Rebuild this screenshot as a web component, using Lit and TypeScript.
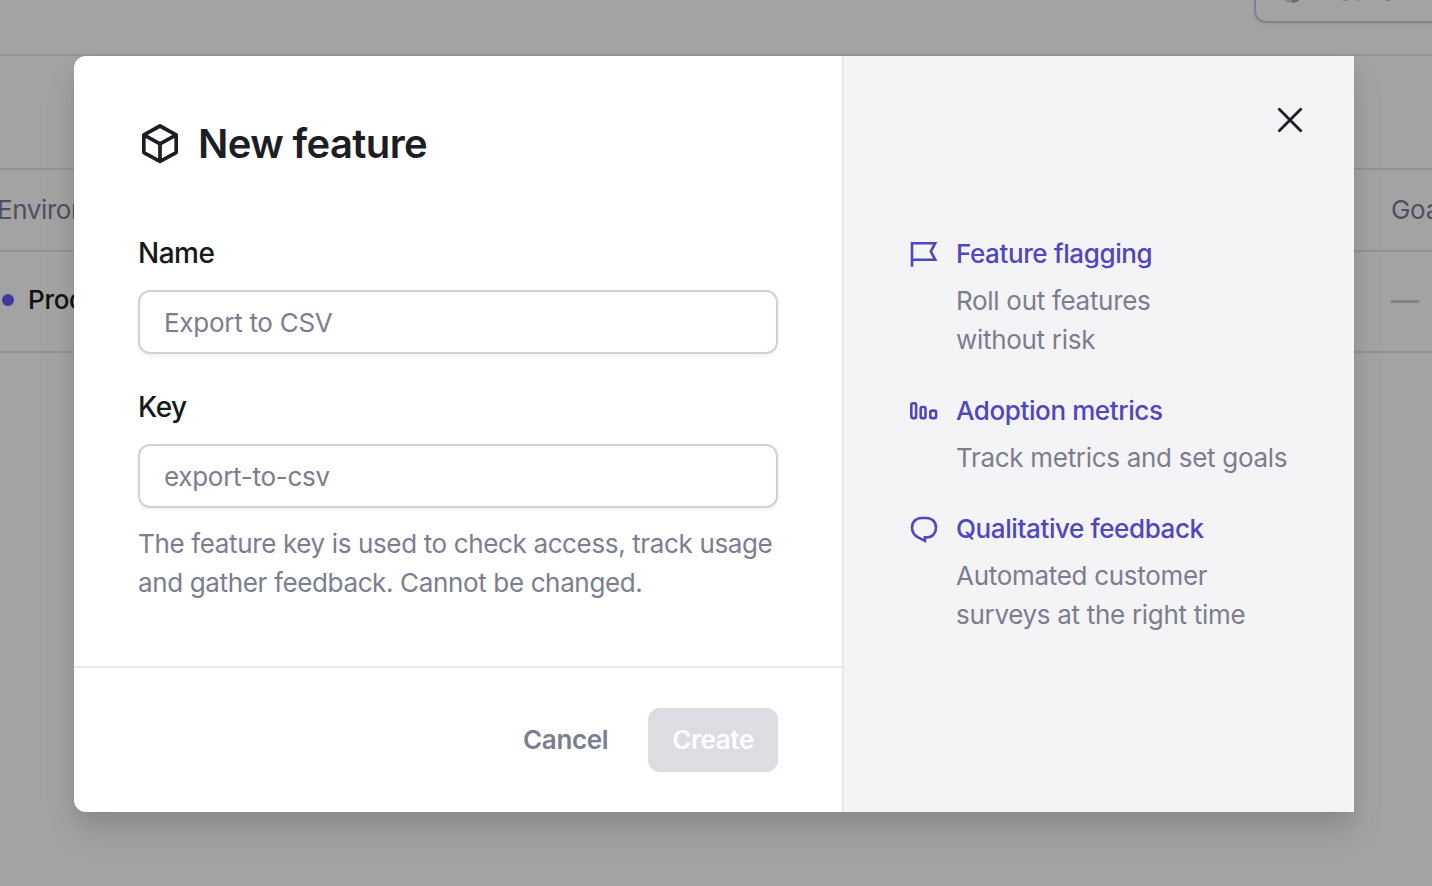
import { LitElement, html, css, svg } from "lit";
import { customElement, property } from "lit/decorators.js";

const icons = {
  flag: svg`<path d="M2 25.7V2.2H25.2L20.8 10.4L25.2 18.7H2" />`,
  bars: svg`<rect x="1.3" y="5.3" width="4.8" height="14.8" rx="1.6" /><rect x="10.7" y="9" width="4.8" height="11.1" rx="1.6" /><rect x="20.3" y="12.6" width="5.8" height="7.5" rx="1.9" />`,
  bubble: svg`<path d="M14.9 21.4H16.6C22.4 21.4 26 17.2 26 11.7C26 5.6 21.8 2 16.2 2H11.8C6.2 2 2 5.6 2 11.7C2 16 4.6 19.6 8.6 21.6L14.9 24.9Z" />`,
};

@customElement("feature-benefit")
class FeatureBenefit extends LitElement {
  @property() icon: keyof typeof icons = "flag";
  @property() heading = "";
  @property() text = "";

  static styles = css`
    :host {
      display: grid;
      grid-template-columns: 28px 1fr;
      column-gap: 18px;
    }
    .icon {
      margin-top: 7px;
      fill: none;
      stroke: #4f46c1;
      stroke-width: 2.6;
    }
    .heading {
      font-weight: 500;
      letter-spacing: -0.4px;
      color: #4f46c1;
    }
    .text {
      grid-column: 2;
      margin-top: 8px;
      white-space: pre-line;
      color: #7b7d91;
    }
  `;

  render() {
    return html`
      <svg class="icon" width="28" height="28" viewBox="0 0 28 28">${icons[this.icon]}</svg>
      <div class="heading">${this.heading}</div>
      <div class="text">${this.text}</div>
    `;
  }
}

@customElement("app-root")
class AppRoot extends LitElement {
  static styles = css`
    :host {
      display: block;
      position: relative;
      width: 1432px;
      height: 886px;
      overflow: hidden;
      background: #a3a3a3;
      font: 400 26px/39px Inter, sans-serif;
      letter-spacing: -0.3px;
      color: #18181c;
    }
    * {
      box-sizing: border-box;
    }
    .topbar {
      display: flex;
      align-items: flex-start;
      height: 56px;
      padding-left: 1254px;
      border-bottom: 2px solid #949495;
    }
    .account {
      display: flex;
      align-items: flex-end;
      flex: none;
      width: 220px;
      height: 64px;
      margin-top: -41px;
      padding: 0 24px 18px;
      border: 2px solid #828288;
      border-radius: 12px;
      box-shadow: 0 2px 4px rgba(0, 0, 0, 0.06);
    }
    .avatar {
      width: 24px;
      height: 24px;
      border-radius: 50%;
      background: linear-gradient(90deg, #85868c 50%, #696b74 50%);
    }
    .marks {
      margin: 0 0 1px 36px;
      fill: #7c7c82;
    }
    .table {
      margin-top: 112px;
      border-top: 2px solid #929293;
    }
    .row {
      display: grid;
      grid-template-columns: 1391px 200px;
      align-items: center;
      height: 82px;
      padding-bottom: 2px;
      border-bottom: 2px solid #929293;
      white-space: nowrap;
    }
    .row.head {
      color: #4e5060;
    }
    .row.body {
      height: 101px;
      padding-bottom: 4px;
    }
    .head-env {
      margin-left: -3px;
      letter-spacing: -0.4px;
    }
    .env {
      display: flex;
      align-items: center;
      gap: 14px;
      padding-left: 2px;
      font-weight: 500;
      color: #121214;
    }
    .dot {
      width: 12px;
      height: 12px;
      margin-top: 1px;
      border-radius: 50%;
      background: #41389f;
    }
    .none {
      padding-top: 2px;
      font-size: 28px;
      font-weight: 500;
      color: #7f7f87;
    }
    .modal {
      position: absolute;
      left: 74px;
      top: 56px;
      display: grid;
      grid-template-columns: 768px 512px;
      width: 1280px;
      height: 756px;
      border-radius: 12px 0 0 12px;
      background: #fff;
      box-shadow: 0 20px 32px rgba(0, 0, 0, 0.1), 0 10px 16px rgba(0, 0, 0, 0.06);
    }
    .main {
      display: flex;
      flex-direction: column;
    }
    .form {
      flex: 1;
      padding: 58px 64px 0;
    }
    .title {
      display: flex;
      align-items: center;
      gap: 16px;
      height: 60px;
      margin: 0 0 60px;
      font-size: 40px;
      font-weight: 600;
      line-height: 60px;
      letter-spacing: -0.62px;
      color: #1d1e25;
    }
    .cube {
      fill: none;
      stroke: #1d1e25;
      stroke-width: 3.7;
      stroke-linejoin: round;
    }
    .label {
      display: block;
      font-size: 28px;
      font-weight: 500;
      letter-spacing: -0.5px;
      color: #18181c;
    }
    .input {
      display: block;
      width: 640px;
      height: 64px;
      margin: 17px 0 34px;
      padding: 0 24px;
      border: 2px solid #d1d1d8;
      border-radius: 12px;
      background: #fff;
      font: inherit;
      letter-spacing: -0.28px;
      box-shadow: 0 2px 4px rgba(0, 0, 0, 0.06);
    }
    .input::placeholder {
      color: #7b7d91;
      opacity: 1;
    }
    .input.key {
      margin-bottom: 16px;
    }
    .help {
      margin: 0;
      white-space: pre;
      letter-spacing: -0.36px;
      color: #7b7d91;
    }
    .footer {
      display: flex;
      justify-content: flex-end;
      align-items: center;
      gap: 16px;
      height: 146px;
      padding: 0 64px;
      border-top: 2px solid #e9e9ec;
    }
    .button {
      height: 64px;
      padding: 0 24px 2px;
      border: 0;
      border-radius: 12px;
      background: none;
      font: inherit;
      font-weight: 600;
      letter-spacing: -0.34px;
      color: #7b7d91;
    }
    .button.primary {
      background: #dcdde2;
      color: #fff;
    }
    .side {
      display: flex;
      flex-direction: column;
      border-left: 2px solid #e6e6ea;
      background: #f4f4f6;
    }
    .close {
      align-self: flex-end;
      margin: 48px 48px 0 0;
      fill: none;
      stroke: #1d1e25;
      stroke-width: 2.8;
      stroke-linecap: round;
    }
    .benefits {
      display: flex;
      flex-direction: column;
      gap: 32px;
      padding: 98px 0 0 66px;
    }
  `;

  render() {
    return html`
      <header class="topbar">
        <div class="account">
          <div class="avatar"></div>
          <svg class="marks" width="70" height="4" viewBox="0 0 70 4">
            <path d="M3 2H7V3H3ZM17 2H19V3H17ZM46 2H50V3H46Z" />
          </svg>
        </div>
      </header>
      <div class="table">
        <div class="row head">
          <span class="head-env">Environment</span>
          <span>Goal</span>
        </div>
        <div class="row body">
          <span class="env"><i class="dot"></i>Production</span>
          <span class="none">—</span>
        </div>
      </div>

      <section class="modal" role="dialog">
        <div class="main">
          <div class="form">
            <h1 class="title">
              <svg class="cube" width="44" height="44" viewBox="0 0 44 44">
                <path d="M22 4L38.2 12.8V30.6L22 39.4L5.8 30.6V12.8ZM5.8 12.8L22 21.8L38.2 12.8M22 21.8V39.4" />
              </svg>
              New feature
            </h1>
            <label class="label">Name</label>
            <input class="input" placeholder="Export to CSV" />
            <label class="label">Key</label>
            <input class="input key" placeholder="export-to-csv" />
            <p class="help">${"The feature key is used to check access, track usage\nand gather feedback. Cannot be changed."}</p>
          </div>
          <div class="footer">
            <button class="button">Cancel</button>
            <button class="button primary">Create</button>
          </div>
        </div>
        <aside class="side">
          <svg class="close" width="32" height="32" viewBox="0 0 32 32">
            <path d="M5.3 5.3L26.7 26.7M26.7 5.3L5.3 26.7" />
          </svg>
          <div class="benefits">
            <feature-benefit icon="flag" heading="Feature flagging" text=${"Roll out features\nwithout risk"}></feature-benefit>
            <feature-benefit icon="bars" heading="Adoption metrics" text="Track metrics and set goals"></feature-benefit>
            <feature-benefit icon="bubble" heading="Qualitative feedback" text=${"Automated customer\nsurveys at the right time"}></feature-benefit>
          </div>
        </aside>
      </section>
    `;
  }
}
